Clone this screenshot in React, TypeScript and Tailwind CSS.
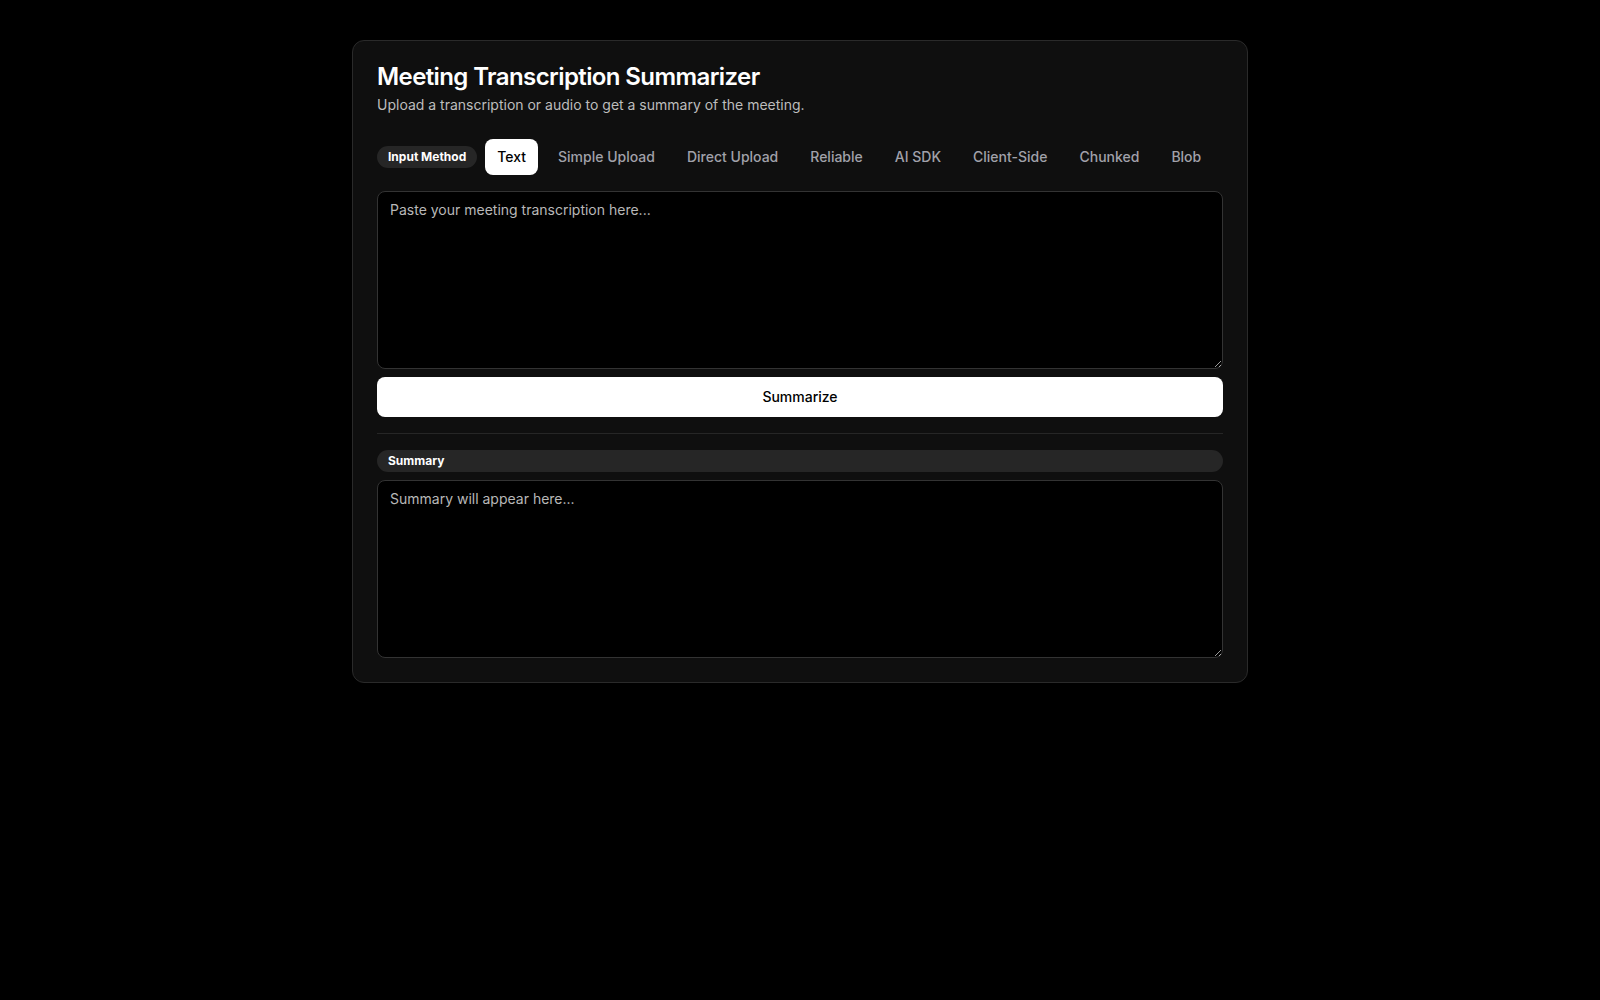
import { useState } from "react";

const tabs = [
  "Text",
  "Simple Upload",
  "Direct Upload",
  "Reliable",
  "AI SDK",
  "Client-Side",
  "Chunked",
  "Blob",
];

const Badge = ({ children, wide }: { children: React.ReactNode; wide?: boolean }) => (
  <span
    className={`h-[22px] shrink-0 items-center whitespace-nowrap rounded-full bg-[#262626] px-[11px] text-xs font-bold text-white ${
      wide ? "flex w-full" : "inline-flex"
    }`}
  >
    {children}
  </span>
);

export default function App() {
  const [active, setActive] = useState("Text");
  const [text, setText] = useState("");
  const [summary, setSummary] = useState("");

  return (
    <div
      className="min-h-screen bg-black pt-10 text-white antialiased"
      style={{ fontFamily: "Inter, 'Noto Sans', sans-serif" }}
    >
      <div className="mx-auto max-w-4xl rounded-xl border border-[#2a2a2a] bg-[#0f0f0f]">
        {/* Header */}
        <div className="flex flex-col gap-1.5 p-6">
          <h1 className="text-2xl font-semibold leading-none tracking-tight">
            Meeting Transcription Summarizer
          </h1>
          <p className="text-sm text-[#bdbdbd]">
            Upload a transcription or audio to get a summary of the meeting.
          </p>
        </div>

        <div className="px-6 pb-6">
          {/* Tabs */}
          <div className="flex h-9 items-center gap-2">
            <Badge>Input Method</Badge>
            {tabs.map((t) => (
              <button
                key={t}
                onClick={() => setActive(t)}
                className={`h-9 shrink-0 whitespace-nowrap rounded-lg px-3 text-sm font-medium ${
                  active === t ? "bg-white text-black" : "text-[#a1a1aa]"
                }`}
              >
                {t}
              </button>
            ))}
          </div>

          <textarea
            value={text}
            onChange={(e) => setText(e.target.value)}
            placeholder="Paste your meeting transcription here..."
            className="mt-4 block h-[178px] w-full rounded-lg border border-[#333] bg-black px-3 py-2 text-sm text-white placeholder:text-[#b8b8b8] focus:outline-none"
          />

          <button className="mt-2 h-10 w-full rounded-lg bg-white text-sm font-medium text-black">
            Summarize
          </button>

          <div className="my-4 h-px bg-[#262626]" />

          <Badge wide>Summary</Badge>

          <textarea
            value={summary}
            onChange={(e) => setSummary(e.target.value)}
            placeholder="Summary will appear here..."
            className="mt-2 block h-[178px] w-full rounded-lg border border-[#333] bg-black px-3 py-2 text-sm text-white placeholder:text-[#b8b8b8] focus:outline-none"
          />
        </div>
      </div>
    </div>
  );
}
